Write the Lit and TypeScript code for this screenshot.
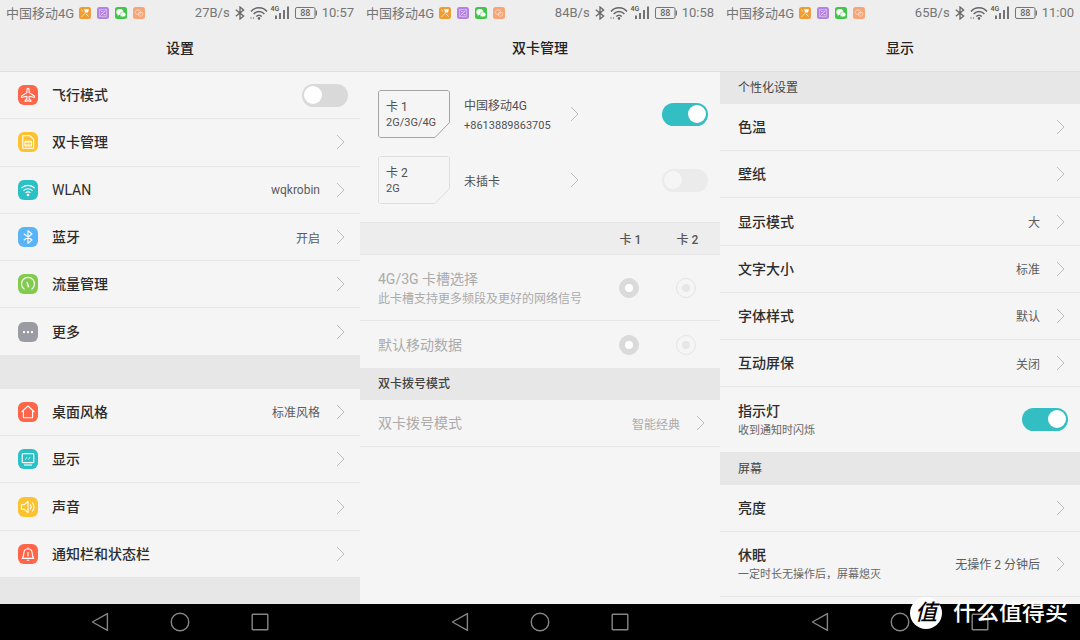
import { LitElement, html, css, svg, nothing, TemplateResult } from "lit";
import { customElement, property } from "lit/decorators.js";

const base = css`
  * {
    box-sizing: border-box;
  }
  h1,
  h2,
  p {
    margin: 0;
    font-weight: inherit;
    font-size: inherit;
  }
  a {
    color: inherit;
    text-decoration: none;
  }
  svg {
    display: block;
    flex: none;
  }
  .switch {
    appearance: none;
    flex: none;
    display: flex;
    align-items: center;
    width: 46px;
    height: 23px;
    margin: 0;
    padding: 0 2px;
    border-radius: 12px;
    background: #d9d9d9;
  }
  .switch::before {
    content: "";
    width: 18px;
    height: 18px;
    border-radius: 50%;
    background: #fff;
  }
  .switch:checked {
    background: #33bec4;
    justify-content: flex-end;
  }
  .switch:disabled {
    background: #ebebeb;
  }
  .switch:disabled::before {
    background: #f5f5f5;
  }
`;

const chevron = html`<svg width="9" height="16" viewBox="0 0 9 16" fill="none" stroke="#bdbdbd" aria-hidden="true">
  <path d="M1 1L8 8L1 15" />
</svg>`;

const glyphs: Record<string, { color: string; art: TemplateResult }> = {
  plane: {
    color: "#ff6549",
    art: svg`<path d="M10 3.3C9.2 3.3 8.9 4.3 8.9 5.2V7.6L3.6 11V12.5L8.9 11.3V14L7.2 15.3V16.4L10 15.8L12.8 16.4V15.3L11.1 14V11.3L16.4 12.5V11L11.1 7.6V5.2C11.1 4.3 10.8 3.3 10 3.3Z"/>`,
  },
  sim: {
    color: "#fdc22f",
    art: svg`<path d="M4.8 3.8H12L15.6 7.2V16.2H4.8Z"/><rect x="6.9" y="9.2" width="6.6" height="4.8" rx="0.6" fill="#fff" fill-opacity=".55"/><path d="M7 11.6H13.4" stroke="#fdc22f" stroke-width=".7"/>`,
  },
  wifi: {
    color: "#2bc0c5",
    art: svg`<path d="M3.2 8.2C7 4.4 13 4.4 16.8 8.2M5.4 10.6C8 8.1 12 8.1 14.6 10.6M7.5 12.9C9 11.6 11 11.6 12.5 12.9"/><circle cx="10" cy="15" r="1.3" fill="#fff" stroke="none"/>`,
  },
  bluetooth: {
    color: "#58b3f7",
    art: svg`<path d="M5.8 6.8L14 13L10 16.4V3.6L14 7L5.8 13.2"/>`,
  },
  gauge: {
    color: "#82cb4e",
    art: svg`<path d="M6.6 15.4A6.5 6.5 0 1 1 13.4 15.4"/><path d="M9 8L10.6 13.4" stroke-width="1.4"/>`,
  },
  more: {
    color: "#9b9ba3",
    art: svg`<g fill="#fff" stroke="none"><rect x="5" y="9.1" width="2" height="2"/><rect x="9" y="9.1" width="2" height="2"/><rect x="13" y="9.1" width="2" height="2"/></g>`,
  },
  home: {
    color: "#ff6549",
    art: svg`<path d="M3.6 10L10 4L16.4 10M5.4 8.8V15.8H14.6V8.8"/>`,
  },
  display: {
    color: "#2bc0c5",
    art: svg`<rect x="4.2" y="4.6" width="11.6" height="9" rx="0.8"/><path d="M6 16H14"/><path d="M7.4 10.6L9.2 8M10.4 10.6L12.2 8" stroke-width=".7"/>`,
  },
  sound: {
    color: "#fdc22f",
    art: svg`<path d="M3.4 7.8H6L10 4.4V15.6L6 12.2H3.4ZM12.2 7.6C13.3 9 13.3 11 12.2 12.4M14.2 5.6C16.6 8 16.6 12 14.2 14.4"/>`,
  },
  bell: {
    color: "#ff6549",
    art: svg`<path d="M4.2 14.4C5.8 13 5.6 11 5.8 9C6 6.6 7.8 5 10 4.8C12.2 5 14 6.6 14.2 9C14.4 11 14.2 13 15.8 14.4ZM10 3.4V4.8M8.8 16.2H11.2M10 8V12.4"/>`,
  },
};

@customElement("status-bar")
class StatusBar extends LitElement {
  @property() speed = "";
  @property() time = "";

  static styles = [
    base,
    css`
      :host {
        display: flex;
        align-items: center;
        justify-content: space-between;
        height: 25px;
        padding: 0 6px;
        font-size: 13px;
        color: #757575;
        white-space: nowrap;
      }
      .side {
        display: flex;
        align-items: center;
        gap: 5px;
      }
      .apps {
        display: flex;
        gap: 6px;
      }
    `,
  ];

  render() {
    return html`
      <div class="side">
        <span>中国移动4G</span>
        <div class="apps">
          <svg width="12" height="12" viewBox="0 0 12 12">
            <rect width="12" height="12" rx="2.5" fill="#ee9d35" />
            <path d="M5 2.2H9.8L9 5.6H6Z" fill="#fff" />
            <path d="M2.4 3L4 4.4M6.6 5.6L2.6 9.8M6.6 6.4L9.6 9.6" stroke="#fce3bd" fill="none" />
          </svg>
          <svg width="12" height="12" viewBox="0 0 12 12">
            <rect width="12" height="12" rx="2.5" fill="#b483e2" />
            <rect x="2.4" y="2.4" width="7.2" height="7.2" fill="none" stroke="#dcc3f3" stroke-width=".7" />
            <path d="M3.6 8.4L8.4 3.6M4 4.4H5.6M6.6 7.8H8.4" stroke="#f1e6fb" stroke-width=".8" />
          </svg>
          <svg width="12" height="12" viewBox="0 0 12 12">
            <rect width="12" height="12" rx="2.5" fill="#3fc547" />
            <ellipse cx="4.8" cy="5" rx="3.5" ry="2.9" fill="#fff" />
            <ellipse cx="7.9" cy="7.4" rx="3" ry="2.5" fill="#fff" stroke="#3fc547" stroke-width=".5" />
            <path d="M2.8 7L2.6 8.8L4.6 7.8Z" fill="#fff" />
          </svg>
          <svg width="12" height="12" viewBox="0 0 12 12">
            <rect width="12" height="12" rx="2.5" fill="#f6a676" />
            <g fill="none" stroke="#fbd9c3" stroke-width=".8">
              <ellipse cx="5" cy="5.2" rx="2.8" ry="2.3" />
              <ellipse cx="7.4" cy="7.2" rx="2.4" ry="2" />
            </g>
          </svg>
        </div>
      </div>
      <div class="side">
        <span>${this.speed}</span>
        <svg width="10" height="14" viewBox="0 0 10 14" fill="none" stroke="#666" stroke-width="1.3">
          <path d="M.8 3.8L8.6 10L5 13V1L8.6 4L.8 10.2" />
        </svg>
        <svg width="40" height="16" viewBox="0 0 40 16" fill="none" stroke="#666" stroke-width="1.5">
          <path d="M1 6.4C5.2 1.6 12.8 1.6 17 6.4M3.6 9C6.7 5.6 11.3 5.6 14.4 9M6.2 11.5C7.8 10 10.2 10 11.8 11.5" />
          <circle cx="9" cy="13.4" r="1.3" fill="#666" stroke="none" />
          <path d="M1 14V12M3.6 14V12" stroke-width="1" stroke="#999" />
          <text x="20.5" y="6" font-size="7" font-weight="500" font-family="Roboto, sans-serif" fill="#555" stroke="none">4G</text>
          <path d="M26 14V10.5M30 14V8M34 14V5M38 14V1.5" stroke-width="1.8" />
        </svg>
        <svg width="22" height="12" viewBox="0 0 22 12" fill="none" stroke="#757575">
          <rect x=".5" y=".5" width="19.5" height="11" rx="1.5" />
          <path d="M21.3 3.5V8.5" stroke-width="1.4" />
          <text x="10.3" y="9.2" text-anchor="middle" font-size="9" font-weight="500" font-family="Roboto, sans-serif" fill="#666" stroke="none">88</text>
        </svg>
        <span>${this.time}</span>
      </div>
    `;
  }
}

@customElement("setting-row")
class SettingRow extends LitElement {
  @property() icon = "";
  @property() label = "";
  @property() note = "";
  @property() value = "";
  @property() toggle: "" | "on" | "off" = "";
  @property({ type: Boolean }) dim = false;

  static styles = [
    base,
    css`
      :host {
        display: flex;
        flex-direction: column;
      }
      .row {
        flex: 1;
        display: flex;
        align-items: center;
        min-height: 47px;
        padding: 0 15px 0 18px;
        border-bottom: 1px solid #e6e6e6;
      }
      .toggled {
        padding-right: 12px;
      }
      .double {
        min-height: 65px;
      }
      .icon {
        margin-right: 14px;
      }
      .text {
        flex: 1;
        display: flex;
        flex-direction: column;
      }
      .double .text {
        padding-top: 3px;
      }
      .title {
        font-size: 14px;
        font-weight: 500;
        line-height: 20px;
        color: #2c2c2c;
      }
      .latin .title {
        font-weight: 400;
      }
      .note {
        font-size: 11px;
        line-height: 20px;
        color: #666;
      }
      .value {
        font-size: 12px;
        color: #5c5c5c;
        margin-right: 16px;
      }
      .dim .title {
        font-weight: 400;
        color: #ababab;
      }
      .dim .value {
        color: #ababab;
      }
    `,
  ];

  render() {
    const glyph = glyphs[this.icon];
    const latin = /^[\w ]+$/.test(this.label);
    const cls = `row${this.note ? " double" : ""}${this.dim ? " dim" : ""}${this.toggle ? " toggled" : ""}${latin ? " latin" : ""}`;
    const body = html`
      ${glyph
        ? html`<svg class="icon" width="20" height="20" viewBox="0 0 20 20" fill="none" stroke="#fff" stroke-width="1.1" stroke-linejoin="round">
            <rect width="20" height="20" rx="6" fill=${glyph.color} stroke="none" />
            ${glyph.art}
          </svg>`
        : nothing}
      <span class="text">
        <span class="title">${this.label}</span>
        ${this.note ? html`<span class="note">${this.note}</span>` : nothing}
      </span>
      ${this.value ? html`<span class="value">${this.value}</span>` : nothing}
    `;
    return this.toggle
      ? html`<label class=${cls}>${body}<input class="switch" type="checkbox" ?checked=${this.toggle === "on"} /></label>`
      : html`<a class=${cls} href="#">${body}${chevron}</a>`;
  }
}

@customElement("phone-screen")
class PhoneScreen extends LitElement {
  @property() heading = "";
  @property() speed = "";
  @property() time = "";

  static styles = [
    base,
    css`
      :host {
        display: flex;
        flex-direction: column;
        min-width: 0;
        background: #f5f5f5;
      }
      .top {
        background: #eee;
        border-bottom: 1px solid #e0e0e0;
      }
      .heading {
        line-height: 46px;
        font-size: 14px;
        font-weight: 500;
        text-align: center;
        color: #222;
      }
      .content {
        flex: 1;
        display: flex;
        flex-direction: column;
      }
      .nav {
        display: flex;
        justify-content: center;
        align-items: center;
        gap: 60px;
        height: 36px;
        background: #000;
      }
      .key {
        padding: 0;
        border: 0;
        background: none;
      }
    `,
  ];

  render() {
    const key = (name: string, shape: TemplateResult) => html`<button class="key" aria-label=${name}>
      <svg width="20" height="20" viewBox="0 0 20 20" fill="none" stroke="#858585" stroke-width="1.4" stroke-linejoin="round">${shape}</svg>
    </button>`;
    return html`
      <header class="top">
        <status-bar speed=${this.speed} time=${this.time}></status-bar>
        <h1 class="heading">${this.heading}</h1>
      </header>
      <main class="content"><slot></slot></main>
      <nav class="nav">
        ${key("返回", svg`<path d="M2.4 10L17.4 1.6V18.4Z"/>`)}
        ${key("主屏幕", svg`<circle cx="10" cy="10" r="8.8"/>`)}
        ${key("最近任务", svg`<rect x="2.2" y="2.2" width="15.6" height="15.6" rx="0.6"/>`)}
      </nav>
    `;
  }
}

@customElement("app-root")
class AppRoot extends LitElement {
  static styles = [
    base,
    css`
      :host {
        display: grid;
        grid-template-columns: repeat(3, 1fr);
        min-height: 100vh;
        position: relative;
        overflow: hidden;
        font-family: Roboto, "Noto Sans CJK SC", sans-serif;
      }
      .fill {
        flex: 1 0 auto;
      }
      .gap {
        height: 33px;
        background: #e7e7e7;
      }
      .rest {
        height: 26px;
        background: #e7e7e7;
      }
      .tail {
        height: 7px;
      }
      .section {
        padding: 0 18px;
        font-size: 12px;
        line-height: 32px;
        color: #444;
        background: #e7e7e7;
      }
      .strong {
        font-weight: 500;
      }
      .sims {
        display: flex;
        flex-direction: column;
        gap: 18px;
        padding: 18px 12px 18px 18px;
      }
      .sim {
        display: grid;
        grid-template-columns: 72px 92px 9px 1fr;
        column-gap: 14px;
        align-items: center;
        color: #505050;
      }
      .card {
        display: grid;
        height: 48px;
      }
      .outline,
      .slot {
        grid-area: 1 / 1;
      }
      .slot {
        padding: 9px 0 0 8px;
        font-size: 12px;
        line-height: 16px;
      }
      .bands {
        font-size: 11px;
      }
      .info {
        padding-top: 3px;
      }
      .carrier {
        font-size: 12px;
        line-height: 20px;
      }
      .number {
        font-size: 11px;
        line-height: 20px;
      }
      .sim .switch {
        justify-self: end;
      }
      .matrix {
        display: grid;
        grid-template-columns: 1fr 57px 57px;
        align-items: center;
        justify-items: center;
        min-height: 47px;
        padding: 0 6px 0 18px;
        border-bottom: 1px solid #e6e6e6;
        color: #ababab;
      }
      .columns {
        min-height: 33px;
        padding-right: 4px;
        border-top: 1px solid #e4e4e4;
        background: #ededed;
        font-size: 12px;
        font-weight: 500;
        color: #555;
      }
      .tall {
        min-height: 66px;
      }
      .last {
        border-bottom: 0;
      }
      .choice {
        justify-self: start;
        font-size: 14px;
        line-height: 20px;
      }
      .tall .choice {
        padding-top: 2px;
      }
      .hint {
        font-size: 12px;
      }
      .radio {
        appearance: none;
        display: grid;
        place-items: center;
        width: 20px;
        height: 20px;
        margin: 0;
        border: 1px solid #e4e4e4;
        border-radius: 50%;
      }
      .radio::before {
        content: "";
        width: 8px;
        height: 8px;
        border-radius: 50%;
        background: #e6e6e6;
      }
      .radio:checked {
        border-color: #dadada;
        background: #dadada;
      }
      .radio:checked::before {
        background: #fff;
      }
      .mark {
        position: absolute;
        right: 12px;
        bottom: 11px;
        display: flex;
        align-items: center;
        gap: 11px;
        color: #fff;
        font-size: 23px;
        font-weight: 500;
        line-height: 32px;
      }
      .seal {
        width: 32px;
        height: 32px;
        border-radius: 50%;
        background: #fff;
        color: #000;
        font-size: 22px;
        font-style: italic;
        line-height: 31px;
        text-align: center;
      }
    `,
  ];

  private sim(n: number, bands: string, info: TemplateResult, on: boolean) {
    return html`<div class="sim">
      <div class="card">
        <svg class="outline" width="72" height="48" viewBox="0 0 72 48" fill="none" stroke=${on ? "#a3a3a3" : "#dedede"} stroke-linejoin="round">
          <path d="M2 .5H70L71.5 2V32.5L57 47.5H2L.5 46V2Z" />
        </svg>
        <div class="slot">
          <p>卡 ${n}</p>
          <p class="bands">${bands}</p>
        </div>
      </div>
      <div class="info">${info}</div>
      ${chevron}
      <input class="switch" type="checkbox" aria-label="卡 ${n}" ?checked=${on} ?disabled=${!on} />
    </div>`;
  }

  private choice(name: string, label: string, hint = "") {
    return html`<div class="matrix ${hint ? "tall" : "last"}" role="radiogroup" aria-label=${label}>
      <div class="choice">
        <p>${label}</p>
        ${hint ? html`<p class="hint">${hint}</p>` : nothing}
      </div>
      <input class="radio" type="radio" name=${name} aria-label="卡 1" checked disabled />
      <input class="radio" type="radio" name=${name} aria-label="卡 2" disabled />
    </div>`;
  }

  render() {
    return html`
      <phone-screen heading="设置" speed="27B/s" time="10:57">
        <setting-row class="fill" icon="plane" label="飞行模式" toggle="off"></setting-row>
        <setting-row class="fill" icon="sim" label="双卡管理"></setting-row>
        <setting-row class="fill" icon="wifi" label="WLAN" value="wqkrobin"></setting-row>
        <setting-row class="fill" icon="bluetooth" label="蓝牙" value="开启"></setting-row>
        <setting-row class="fill" icon="gauge" label="流量管理"></setting-row>
        <setting-row class="fill" icon="more" label="更多"></setting-row>
        <div class="gap"></div>
        <setting-row class="fill" icon="home" label="桌面风格" value="标准风格"></setting-row>
        <setting-row class="fill" icon="display" label="显示"></setting-row>
        <setting-row class="fill" icon="sound" label="声音"></setting-row>
        <setting-row class="fill" icon="bell" label="通知栏和状态栏"></setting-row>
        <div class="rest"></div>
      </phone-screen>

      <phone-screen heading="双卡管理" speed="84B/s" time="10:58">
        <div class="sims">
          ${this.sim(1, "2G/3G/4G", html`<p class="carrier">中国移动4G</p><p class="number">+8613889863705</p>`, true)}
          ${this.sim(2, "2G", html`<p class="carrier">未插卡</p>`, false)}
        </div>
        <div class="matrix columns"><span></span><span>卡 1</span><span>卡 2</span></div>
        ${this.choice("slot", "4G/3G 卡槽选择", "此卡槽支持更多频段及更好的网络信号")}
        ${this.choice("data", "默认移动数据")}
        <h2 class="section strong">双卡拨号模式</h2>
        <setting-row label="双卡拨号模式" value="智能经典" dim></setting-row>
      </phone-screen>

      <phone-screen heading="显示" speed="65B/s" time="11:00">
        <h2 class="section">个性化设置</h2>
        <setting-row class="fill" label="色温"></setting-row>
        <setting-row class="fill" label="壁纸"></setting-row>
        <setting-row class="fill" label="显示模式" value="大"></setting-row>
        <setting-row class="fill" label="文字大小" value="标准"></setting-row>
        <setting-row class="fill" label="字体样式" value="默认"></setting-row>
        <setting-row class="fill" label="互动屏保" value="关闭"></setting-row>
        <setting-row class="fill" label="指示灯" note="收到通知时闪烁" toggle="on"></setting-row>
        <h2 class="section">屏幕</h2>
        <setting-row class="fill" label="亮度"></setting-row>
        <setting-row class="fill" label="休眠" note="一定时长无操作后，屏幕熄灭" value="无操作 2 分钟后"></setting-row>
        <div class="tail"></div>
      </phone-screen>

      <div class="mark"><span class="seal">值</span><span>什么值得买</span></div>
    `;
  }
}
